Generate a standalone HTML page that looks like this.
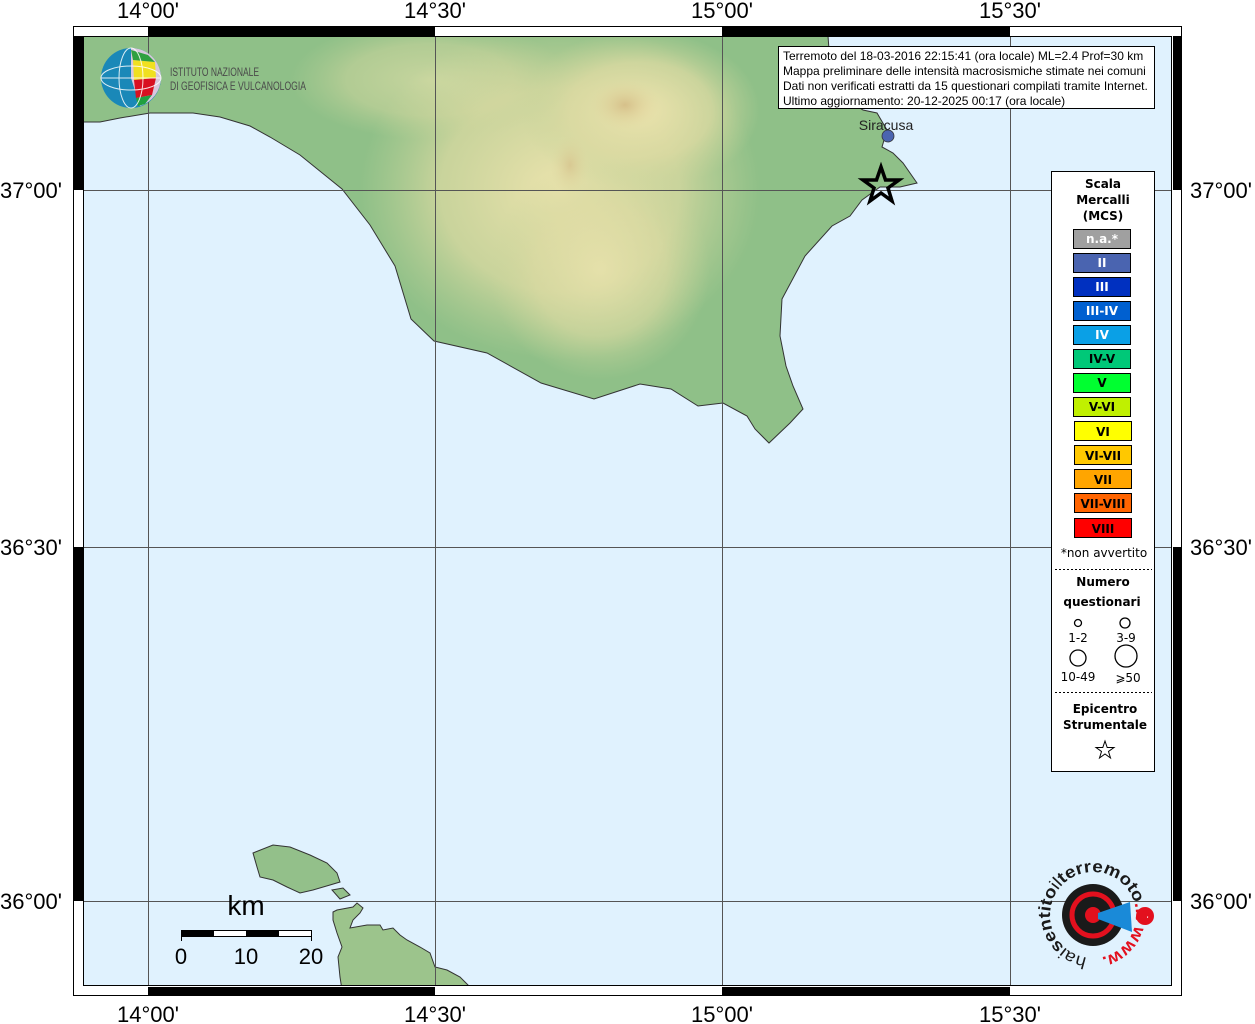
<!DOCTYPE html>
<html><head><meta charset="utf-8"><style>
html,body{margin:0;padding:0;background:#fff;}
svg{display:block;}
.t{font-family:"Liberation Sans",sans-serif;font-size:22px;fill:#000;}
.lg{font-family:"DejaVu Sans",sans-serif;font-weight:bold;font-size:12px;text-anchor:middle;}
.lr{font-family:"DejaVu Sans",sans-serif;font-size:12px;text-anchor:middle;}
</style></head><body>
<svg width="1255" height="1024" viewBox="0 0 1255 1024" xmlns="http://www.w3.org/2000/svg">
<defs>
<radialGradient id="hl1" cx="0.5" cy="0.5" r="0.5"><stop offset="0" stop-color="#ebe3ad"/><stop offset="0.6" stop-color="#dcdaa2" stop-opacity="0.75"/><stop offset="1" stop-color="#c8d49a" stop-opacity="0"/></radialGradient>
<radialGradient id="hl2" cx="0.5" cy="0.5" r="0.5"><stop offset="0" stop-color="#d6c08a"/><stop offset="1" stop-color="#e0d8a0" stop-opacity="0"/></radialGradient>
<clipPath id="map"><rect x="83" y="36" width="1089" height="950"/></clipPath>
<clipPath id="land"><path id="sic" d="M83,36 L828,36 L830,63 L843,97 L863,110 L877,113 L887,130 L882,147 L893,153 L903,163 L917,183 L900,187 L880,187 L862,200 L850,216 L832,226 L805,256 L782,299 L780,336 L786,366 L793,386 L803,409 L790,423 L769,443 L755,429 L747,416 L723,403 L698,406 L671,389 L640,384 L594,399 L541,383 L487,353 L434,341 L411,319 L395,266 L370,225 L342,189 L300,155 L270,137 L250,126 L220,117 L193,113 L150,113 L120,118 L100,122 L83,122 Z"/></clipPath>
<path id="ring" d="M1093,958 A43,43 0 1,1 1093.1,958"/>
</defs>
<rect x="0" y="0" width="1255" height="1024" fill="#fff"/>
<g clip-path="url(#map)">
<rect x="83" y="36" width="1089" height="950" fill="#e0f2fe"/>
<g clip-path="url(#land)">
<rect x="83" y="36" width="900" height="420" fill="#8fc088"/>
<ellipse cx="560" cy="190" rx="200" ry="170" fill="url(#hl1)"/>
<ellipse cx="640" cy="110" rx="120" ry="80" fill="url(#hl1)"/>
<ellipse cx="430" cy="80" rx="140" ry="60" fill="url(#hl1)" opacity="0.6"/>
<ellipse cx="600" cy="270" rx="110" ry="110" fill="url(#hl1)" opacity="0.8"/>
<ellipse cx="625" cy="105" rx="35" ry="25" fill="url(#hl2)"/>
<ellipse cx="570" cy="165" rx="20" ry="30" fill="url(#hl2)" opacity="0.7"/>
</g>
<use href="#sic" fill="none" stroke="#333" stroke-width="1"/>
<path d="M253,853 L273,845 L290,847 L310,855 L327,863 L337,873 L340,882 L330,885 L313,890 L300,893 L287,887 L273,880 L260,877 L257,867 Z" fill="#93c08a" stroke="#333" stroke-width="1"/>
<path d="M332,890 L343,888 L350,895 L340,899 Z" fill="#93c08a" stroke="#333" stroke-width="1"/>
<path d="M333,912 L337,910 L353,907 L357,903 L363,908 L360,913 L353,920 L350,928 L367,925 L380,925 L383,930 L393,928 L400,935 L407,940 L420,947 L430,953 L435,967 L447,970 L460,977 L470,987 L342,990 L340,977 L338,957 L342,947 L337,933 L333,920 Z" fill="#9cc48c" stroke="#333" stroke-width="1"/>
<g stroke="#555" stroke-width="1">
<line x1="148.5" y1="36" x2="148.5" y2="986"/><line x1="435.5" y1="36" x2="435.5" y2="986"/>
<line x1="722.5" y1="36" x2="722.5" y2="986"/><line x1="1010.5" y1="36" x2="1010.5" y2="986"/>
<line x1="83" y1="190.5" x2="1172" y2="190.5"/><line x1="83" y1="547.5" x2="1172" y2="547.5"/>
<line x1="83" y1="901.5" x2="1172" y2="901.5"/>
</g>
</g>
<rect x="73.5" y="26.5" width="1108" height="969" fill="none" stroke="#000"/>
<rect x="83.5" y="36.5" width="1088" height="949" fill="none" stroke="#000"/>
<g fill="#000">
<rect x="148" y="27" width="287" height="9"/><rect x="722" y="27" width="288" height="9"/>
<rect x="148" y="987" width="287" height="9"/><rect x="722" y="987" width="288" height="9"/>
<rect x="74" y="36" width="9" height="154"/><rect x="74" y="547" width="9" height="354"/>
<rect x="1173" y="36" width="9" height="154"/><rect x="1173" y="547" width="9" height="354"/>
</g>
<g class="t" text-anchor="middle">
<text x="148" y="18">14°00'</text><text x="435" y="18">14°30'</text><text x="722" y="18">15°00'</text><text x="1010" y="18">15°30'</text>
<text x="148" y="1022">14°00'</text><text x="435" y="1022">14°30'</text><text x="722" y="1022">15°00'</text><text x="1010" y="1022">15°30'</text>
</g>
<g class="t">
<text x="0" y="198">37°00'</text><text x="0" y="555">36°30'</text><text x="0" y="909">36°00'</text>
<text x="1190" y="198">37°00'</text><text x="1190" y="555">36°30'</text><text x="1190" y="909">36°00'</text>
</g>
<circle cx="131" cy="78" r="30" fill="#1a88b8"/>
<path d="M131,48 A30,30 0 0,1 161,78 A30,30 0 0,1 140,106 L131,78 Z" fill="#d9c8dc"/>
<path d="M133,60 L155,62 L156,78 L134,80 Z" fill="#f0e020"/>
<path d="M134,80 L156,78 L152,95 L136,98 Z" fill="#d81020"/>
<path d="M136,98 L152,95 L145,104 L138,106 Z" fill="#20a040"/>
<path d="M131,50 L148,55 L155,62 L133,60 Z" fill="#30a040"/>
<g stroke="#fff" stroke-width="1" fill="none" opacity="0.85">
<ellipse cx="131" cy="78" rx="12" ry="30"/><ellipse cx="131" cy="78" rx="30" ry="12"/><line x1="101" y1="78" x2="161" y2="78"/>
</g>
<text x="170" y="76" font-family="Liberation Sans,sans-serif" font-size="12" fill="#4a4a4a" textLength="89" lengthAdjust="spacingAndGlyphs">ISTITUTO NAZIONALE</text>
<text x="170" y="90" font-family="Liberation Sans,sans-serif" font-size="12" fill="#4a4a4a" textLength="136" lengthAdjust="spacingAndGlyphs">DI GEOFISICA E VULCANOLOGIA</text>
<rect x="778.5" y="46.5" width="376" height="62" fill="#fff" stroke="#000"/>
<g font-family="Liberation Sans,sans-serif" font-size="12" fill="#000">
<text x="783" y="60">Terremoto del 18-03-2016 22:15:41 (ora locale) ML=2.4 Prof=30 km</text>
<text x="783" y="75">Mappa preliminare delle intensità macrosismiche stimate nei comuni</text>
<text x="783" y="90">Dati non verificati estratti da 15 questionari compilati tramite Internet.</text>
<text x="783" y="105">Ultimo aggiornamento: 20-12-2025 00:17 (ora locale)</text>
</g>
<text x="886" y="130" font-family="Liberation Sans,sans-serif" font-size="14" text-anchor="middle" fill="#222">Siracusa</text>
<circle cx="888" cy="136" r="6" fill="#4a64b0" stroke="#333" stroke-width="0.8"/>
<path d="M881,167 L885.5,180 L899,180 L888,188 L892,201 L881,193 L870,201 L874,188 L863,180 L876.5,180 Z" fill="none" stroke="#000" stroke-width="3.5"/>
<rect x="1051.5" y="171.5" width="103" height="600" fill="#fff" stroke="#000"/>
<text class="lg" x="1103" y="188">Scala</text><text class="lg" x="1103" y="204">Mercalli</text><text class="lg" x="1103" y="220">(MCS)</text>
<g stroke="#000" stroke-width="1">
<rect x="1073.5" y="229.5" width="57" height="19" fill="#a0a0a0"/>
<rect x="1073.5" y="253.5" width="57" height="19" fill="#4a64b0"/>
<rect x="1073.5" y="277.5" width="57" height="19" fill="#0030c0"/>
<rect x="1073.5" y="301.5" width="57" height="19" fill="#0060d0"/>
<rect x="1073.5" y="325.5" width="57" height="19" fill="#0aa0e6"/>
<rect x="1073.5" y="349.5" width="57" height="19" fill="#00c878"/>
<rect x="1073.5" y="373.5" width="57" height="19" fill="#00ff30"/>
<rect x="1073.5" y="397.5" width="57" height="19" fill="#c0f000"/>
<rect x="1074.5" y="421.5" width="57" height="19" fill="#ffff00"/>
<rect x="1074.5" y="445.5" width="57" height="19" fill="#ffc800"/>
<rect x="1074.5" y="469.5" width="57" height="19" fill="#ffa500"/>
<rect x="1074.5" y="493.5" width="57" height="19" fill="#ff6400"/>
<rect x="1074.5" y="518.5" width="57" height="19" fill="#ff0000"/>
</g>
<g class="lg">
<text x="1102" y="243" fill="#fff">n.a.*</text><text x="1102" y="267" fill="#fff">II</text><text x="1102" y="291" fill="#fff">III</text>
<text x="1102" y="315" fill="#fff">III-IV</text><text x="1102" y="339" fill="#fff">IV</text><text x="1102" y="363">IV-V</text>
<text x="1102" y="387">V</text><text x="1102" y="411">V-VI</text><text x="1103" y="436">VI</text><text x="1103" y="460">VI-VII</text>
<text x="1103" y="484">VII</text><text x="1103" y="508">VII-VIII</text><text x="1103" y="533">VIII</text>
</g>
<text class="lr" x="1104" y="557">*non avvertito</text>
<line x1="1055" y1="569.5" x2="1152" y2="569.5" stroke="#000" stroke-dasharray="2,2"/>
<text class="lg" x="1103" y="586">Numero</text><text class="lg" x="1102" y="606">questionari</text>
<circle cx="1078" cy="623" r="3.5" fill="none" stroke="#000" stroke-width="1.3"/>
<circle cx="1125" cy="623" r="5" fill="none" stroke="#000" stroke-width="1.3"/>
<text class="lr" x="1078" y="642">1-2</text><text class="lr" x="1126" y="642">3-9</text>
<circle cx="1078" cy="658" r="8" fill="none" stroke="#000" stroke-width="1.3"/>
<circle cx="1126" cy="656" r="11" fill="none" stroke="#000" stroke-width="1.3"/>
<text class="lr" x="1078" y="681">10-49</text><text class="lr" x="1128" y="682">⩾50</text>
<line x1="1055" y1="692.5" x2="1152" y2="692.5" stroke="#000" stroke-dasharray="2,2"/>
<text class="lg" x="1105" y="713">Epicentro</text><text class="lg" x="1105" y="729">Strumentale</text>
<path d="M1105,741 L1107.2,747.5 L1114,747.5 L1108.5,751.5 L1110.5,758 L1105,754 L1099.5,758 L1101.5,751.5 L1096,747.5 L1102.8,747.5 Z" fill="none" stroke="#000" stroke-width="1"/>
<text x="246" y="915" font-family="Liberation Sans,sans-serif" font-size="28" text-anchor="middle">km</text>
<rect x="181.5" y="930.5" width="130" height="6" fill="#fff" stroke="#000"/>
<rect x="182" y="931" width="32" height="5" fill="#000"/><rect x="246" y="931" width="33" height="5" fill="#000"/>
<line x1="181.5" y1="930" x2="181.5" y2="941" stroke="#000"/><line x1="311.5" y1="930" x2="311.5" y2="941" stroke="#000"/>
<g class="t" text-anchor="middle"><text x="181" y="964">0</text><text x="246" y="964">10</text><text x="311" y="964">20</text></g>
<circle cx="1093" cy="915" r="31" fill="#1a1a1a"/>
<circle cx="1093" cy="915" r="21" fill="none" stroke="#e3101e" stroke-width="5"/>
<circle cx="1093" cy="915" r="8" fill="#e3101e"/>
<path d="M1098,913 L1130,902 L1132,932 L1098,919 Z" fill="#1a8ad8"/>
<circle cx="1145" cy="916" r="9" fill="#e3101e"/>
<text x="1145" y="921" font-family="Liberation Sans,sans-serif" font-weight="bold" font-size="12" fill="#fff" text-anchor="middle">~</text>
<text font-family="Liberation Sans,sans-serif" font-size="17" fill="#1a1a1a"><textPath href="#ring" startOffset="6" textLength="255" lengthAdjust="spacingAndGlyphs">hai<tspan font-weight="bold">sentito</tspan>il<tspan font-weight="bold">terremoto</tspan><tspan fill="#e3101e" font-weight="bold">.it</tspan>   <tspan fill="#e3101e" font-weight="bold">www.</tspan></textPath></text>
</svg>
</body></html>
